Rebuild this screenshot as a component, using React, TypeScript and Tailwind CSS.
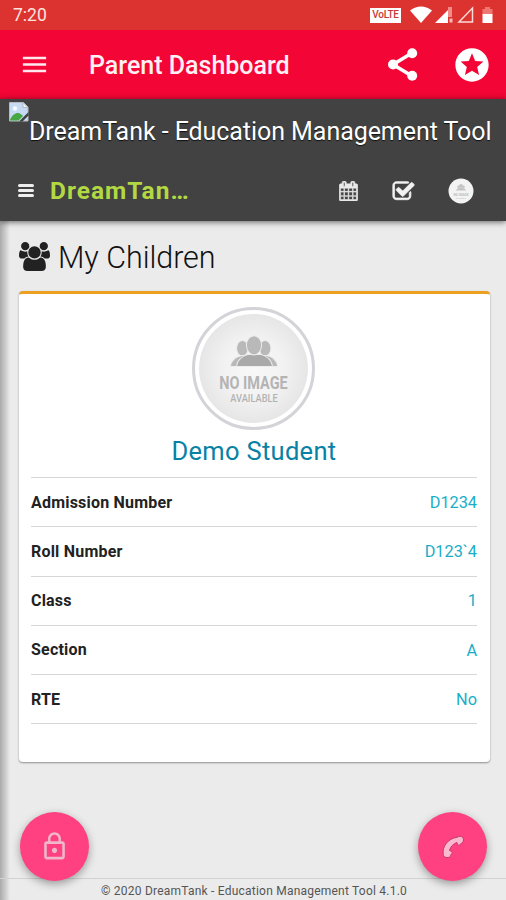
import React from 'react';
import { MdLockOutline, MdMenu, MdStars } from 'react-icons/md';

interface DetailRow {
    label: string;
    value: string;
}

const studentDetails: DetailRow[] = [
    { label: 'Admission Number', value: 'D1234' },
    { label: 'Roll Number', value: 'D123`4' },
    { label: 'Class', value: '1' },
    { label: 'Section', value: 'A' },
    { label: 'RTE', value: 'No' },
];

const ShareIcon: React.FC = () => (
    <svg viewBox="0 0 37 37" fill="#fff" className="size-[37px]">
        <path d="M28 7 9 18.500 28 30" fill="none" stroke="#fff" strokeWidth="3.600" />
        <circle cx="28.200" cy="7.300" r="5" />
        <circle cx="9" cy="18.500" r="5" />
        <circle cx="28.200" cy="29.700" r="5" />
    </svg>
);

const UsersIcon: React.FC<{ className?: string }> = ({ className = '' }) => (
    <svg viewBox="0 0 1920 1792" fill="currentColor" className={className} preserveAspectRatio="none">
        <path d="M593 896q-162 5-265 128h-134q-82 0-138-40.5t-56-118.5q0-353 124-353 6 0 43.5 21t97.5 42.5 119 21.5q67 0 133-23-5 37-5 66 0 139 81 256zm1071 637q0 120-73 189.5t-194 69.5h-874q-121 0-194-69.5t-73-189.5q0-53 3.5-103.5t14-109 26.5-108.5 43-97.5 62-81 85.5-53.5 111.5-20q10 0 43 21.5t73 48 107 48 135 21.5 135-21.5 107-48 73-48 43-21.5q61 0 111.5 20t85.5 53.5 62 81 43 97.5 26.5 108.5 14 109 3.5 103.5zm-1024-1277q0 106-75 181t-181 75-181-75-75-181 75-181 181-75 181 75 75 181zm704 384q0 159-112.5 271.5t-271.5 112.5-271.5-112.5-112.5-271.5 112.5-271.5 271.5-112.5 271.5 112.5 112.5 271.5zm576 225q0 78-56 118.5t-138 40.5h-134q-103-123-265-128 81-117 81-256 0-29-5-66 66 23 133 23 59 0 119-21.5t97.5-42.5 43.5-21q124 0 124 353zm-128-609q0 106-75 181t-181 75-181-75-75-181 75-181 181-75 181 75 75 181z" />
    </svg>
);

const CalendarIcon: React.FC = () => (
    <svg viewBox="64 0 1664 1792" fill="currentColor" stroke="currentColor" strokeWidth="50" className="h-[20px] w-[19px]">
        <path d="M192 1664h288v-288h-288v288zm352 0h320v-288h-320v288zm-352-352h288v-320h-288v320zm352 0h320v-320h-320v320zm-352-384h288v-288h-288v288zm736 736h320v-288h-320v288zm-384-736h320v-288h-320v288zm768 736h288v-288h-288v288zm-384-352h320v-320h-320v320zm-352-864v-288q0-13-9.5-22.5t-22.5-9.5h-64q-13 0-22.5 9.5t-9.5 22.5v288q0 13 9.5 22.5t22.5 9.5h64q13 0 22.5-9.5t9.5-22.5zm736 864h288v-320h-288v320zm-384-384h320v-288h-320v288zm384 0h288v-288h-288v288zm32-480v-288q0-13-9.5-22.5t-22.5-9.5h-64q-13 0-22.5 9.5t-9.5 22.5v288q0 13 9.5 22.5t22.5 9.5h64q13 0 22.5-9.5t9.5-22.5zm384-64v1280q0 52-38 90t-90 38h-1408q-52 0-90-38t-38-90v-1280q0-52 38-90t90-38h128v-96q0-66 47-113t113-47h64q66 0 113 47t47 113v96h384v-96q0-66 47-113t113-47h64q66 0 113 47t47 113v96h128q52 0 90 38t38 90z" />
    </svg>
);

const CheckSquareIcon: React.FC = () => (
    <svg viewBox="0 0 1792 1792" fill="currentColor" stroke="currentColor" strokeWidth="60" className="size-[23px]">
        <path d="M1472 930v318q0 119-84.5 203.5t-203.5 84.5h-832q-119 0-203.5-84.5t-84.5-203.5v-832q0-119 84.5-203.5t203.5-84.5h832q63 0 117 25 15 7 18 23 3 17-9 29l-49 49q-10 10-23 10-3 0-9-2-23-6-45-6h-832q-66 0-113 47t-47 113v832q0 66 47 113t113 47h832q66 0 113-47t47-113v-254q0-13 9-22l64-64q10-10 23-10 6 0 12 3 20 8 20 29zm231-489l-814 814q-24 24-57 24t-57-24l-430-430q-24-24-24-57t24-57l110-110q24-24 57-24t57 24l263 263 647-647q24-24 57-24t57 24l110 110q24 24 24 57t-24 57z" />
    </svg>
);

const PhoneIcon: React.FC = () => (
    <svg viewBox="0 0 24 24" className="size-[24px]">
        <path
            d="M2.200 19C1 11.500 7.500 3.200 16 2.300c1.800-1.300 4.800-1.300 5.800.2.900 1.600 1 3.300.1 4.600-1 1.500-2.600 1.500-3 2.600-.8.900-2.200.5-2.500-.5l-.5-1.700c-3.700 1.300-6.700 4.500-7.400 8l1.700.7c1.300.7 1.200 2 .3 2.800-.9.500-.5 2.200-2 3-1.500.9-3.500.8-4.800-.2-1-.7-1.500-1.600-1.500-2.800z"
            fill="#f9b8cf"
            stroke="#c53a68"
            strokeWidth="1"
            strokeLinejoin="round"
        />
    </svg>
);

// Placeholder glyph the browser shows when a logo fails to load
const BrokenImageIcon: React.FC = () => (
    <svg viewBox="0 0 20 20" className="size-5">
        <path d="M.5.500h14L19 5v14H.5z" fill="#c7daf3" stroke="#b7bbc0" />
        <path d="M14 .5V5.500h5z" fill="#f3f4f6" stroke="#a6abb1" strokeWidth=".7" />
        <circle cx="6" cy="6.500" r="2.200" fill="#f7fbff" />
        <path d="M1 18c2-5 5-7 8-7 2 0 4 2 5 3l-4.500 4.500H1z" fill="#45a843" />
        <path d="M10 19.500 19.500 10v3.500l-6 6z" fill="#424242" />
    </svg>
);

const Avatar: React.FC<{ className?: string }> = ({ className = '' }) => (
    <svg viewBox="0 0 122 122" className={className}>
        <defs>
            <radialGradient id="avatarFill" cx="50%" cy="50%" r="50%">
                <stop offset="0" stopColor="#f8f8f8" />
                <stop offset=".55" stopColor="#f2f2f2" />
                <stop offset="1" stopColor="#e6e6e7" />
            </radialGradient>
        </defs>
        <circle cx="61" cy="61" r="59.500" fill="#fff" stroke="#d3d3d8" strokeWidth="3" />
        <circle cx="61" cy="61" r="54" fill="url(#avatarFill)" />
        <g fill="#b9b9b9" stroke="#ededed" strokeWidth="1">
            <ellipse cx="50" cy="41" rx="5.800" ry="7.800" />
            <ellipse cx="72.500" cy="41" rx="5.800" ry="7.800" />
            <path d="M38 59c1-7 5-10 12-11l24 0c6 1 10 4 11 11z" />
            <path d="M44 59c1-7 5-10 12-12h12c7 2 11 5 12 12z" fill="#a9a9a9" />
            <ellipse cx="61.500" cy="38" rx="7.500" ry="9.500" />
        </g>
        <text x="27" y="81" textLength="68" lengthAdjust="spacingAndGlyphs" fontSize="17.500" fontWeight="700" fill="#b4b4b4">
            NO IMAGE
        </text>
        <text x="38" y="94" textLength="47" lengthAdjust="spacingAndGlyphs" fontSize="10" fontWeight="500" fill="#b2b2b2">
            AVAILABLE
        </text>
    </svg>
);

const SmallAvatar: React.FC<{ className?: string }> = ({ className = '' }) => (
    <svg viewBox="0 0 26 26" className={className}>
        <circle cx="13" cy="13" r="12.500" fill="#f3f3f3" />
        <g fill="#c4c4c4">
            <circle cx="13" cy="8" r="2" />
            <circle cx="10.500" cy="8.700" r="1.300" />
            <circle cx="15.500" cy="8.700" r="1.300" />
            <path d="M8 12.500c.5-2 2-2.500 5-2.500s4.500.5 5 2.500z" />
        </g>
        <text x="5.500" y="17.500" textLength="15" lengthAdjust="spacingAndGlyphs" fontSize="3.800" fontWeight="700" fill="#bdbdbd">
            NO IMAGE
        </text>
        <text x="8" y="20.500" textLength="10" lengthAdjust="spacingAndGlyphs" fontSize="2.300" fill="#c4c4c4">
            AVAILABLE
        </text>
    </svg>
);

const StatusBar: React.FC = () => (
    <div className="flex h-[30px] items-center justify-between bg-[#dd3330] pl-[13px] pr-[12px] text-white">
        <span className="pt-[2px] text-[17.5px] leading-none text-[#ffe2df]">7:20</span>
        <div className="flex items-center">
            <span className="flex h-[15px] w-[31px] items-center justify-center bg-white text-[10px] font-medium leading-none tracking-[-0.3px] text-[#ca3935]">VoLTE</span>
            <svg viewBox="0 0 84 18" className="ml-[9px] h-[18px] w-[84px]" fill="#fff">
                <path d="M0 4.500Q11-3.500 22 4.500L11 17z" />
                <path d="M25 17 38 4v13z" />
                <path d="M38 1h4v10h-4z" fill="#f28c88" />
                <path d="M39.500 12.500h3v4h-3z" fill="#f7bbb8" />
                <path d="M49 16 62.500 2v14z" fill="none" stroke="#ffdbd8" strokeWidth="1.500" />
                <path d="M75 1h5v2h2.500v6h-10V3H75z" fill="#ef7772" />
                <path d="M72.500 8h10v9h-10z" />
            </svg>
        </div>
    </div>
);

const AppBar: React.FC = () => (
    <div className="flex h-[69px] shrink-0 items-center bg-[#f30535] pl-[19px] pr-[14px] text-white">
        <MdMenu className="size-[31px] text-[#ffe9ee]" />
        <h1 className="ml-[39px] flex-1 whitespace-nowrap pt-[3px] text-[25px] font-medium text-[#fff0f3]">Parent Dashboard</h1>
        <ShareIcon />
        <MdStars className="ml-[31px] size-[40px]" />
    </div>
);

const SiteHeader: React.FC = () => (
    <header className="relative z-10 h-[122px] shrink-0 bg-[#424242] text-white shadow-[0_1px_6px_rgba(0,0,0,0.6)]">
        <div className="flex h-[60px] items-start pl-[9px] pt-[3px]">
            <BrokenImageIcon />
            <span className="whitespace-nowrap pt-[13px] text-[25px] leading-[34px] tracking-[-0.06px] [text-shadow:0_1px_1px_#111]">DreamTank - Education Management Tool</span>
        </div>
        <div className="flex h-[62px] items-center pl-[18px] pr-[32px] pt-[1px]">
            <div className="flex w-[16px] flex-col gap-[2px]">
                <span className="h-[3px] rounded-sm bg-[#eee]" />
                <span className="h-[3px] rounded-sm bg-[#eee]" />
                <span className="h-[3px] rounded-sm bg-[#eee]" />
            </div>
            <span className="ml-[16px] flex-1 pt-[2px] text-[24.5px] font-bold tracking-[1px] text-[#b2d943]">DreamTan…</span>
            <span className="text-[#e9e9e9]"><CalendarIcon /></span>
            <span className="ml-[34px] pt-[2px] text-[#f2f2f2]"><CheckSquareIcon /></span>
            <SmallAvatar className="ml-[33px] size-[26px]" />
        </div>
    </header>
);

const StudentCard: React.FC = () => (
    <section className="h-[471px] rounded-[4px] border-t-[3px] border-[#eba022] bg-white pl-[12px] pr-[13px] shadow-[0_1px_2px_rgba(0,0,0,0.4)]">
        <div className="flex h-[184px] flex-col items-center border-b-[1.5px] border-[#d6d6d6] pt-[13px]">
            <Avatar className="mr-px size-[123px]" />
            <h3 className="mt-[4px] text-[25.5px] leading-[34px] tracking-[0.3px] text-[#0782a5]">Demo Student</h3>
        </div>
        <dl>
            {studentDetails.map((row) => (
                <div key={row.label} className="flex h-[49.25px] items-center justify-between border-b-[1.5px] border-[#d6d6d6] pt-[1px] text-[16px]">
                    <dt className="font-bold tracking-[0.2px] text-[#222]">{row.label}</dt>
                    <dd className="pt-px text-[16.3px] text-[#19aec8]">{row.value}</dd>
                </div>
            ))}
        </dl>
    </section>
);

const App: React.FC = () => (
    <div className="flex h-[900px] w-[506px] flex-col overflow-hidden bg-[#ebebeb] font-[Roboto,'Liberation_Sans',sans-serif]">
        <StatusBar />
        <AppBar />
        <SiteHeader />
        <main className="relative flex-1">
            <div className="absolute inset-y-0 left-0 w-[10px] bg-linear-to-r from-[#aaa] to-[#ebebeb]" />
            <div className="pl-[19px] pr-[16px]">
                <h2 className="flex h-[70px] items-center text-[30.5px] font-light text-[#111]">
                    <UsersIcon className="mr-[8px] mt-[1px] h-[29px] w-[31px] text-[#222]" />
                    <span className="pt-[4px] tracking-[-0.05px]">My Children</span>
                </h2>
                <StudentCard />
            </div>
            <button type="button" aria-label="Lock" className="absolute bottom-[19px] left-[20px] z-10 flex size-[69px] items-center justify-center rounded-full bg-[#ff4081] text-[#f0b6c9] shadow-[0_3px_8px_rgba(0,0,0,0.35)]">
                <MdLockOutline className="size-[31px]" />
            </button>
            <button type="button" aria-label="Call" className="absolute bottom-[19px] right-[19px] z-10 flex size-[69px] items-center justify-center rounded-full bg-[#ff4081] shadow-[0_3px_8px_rgba(0,0,0,0.35)]">
                <PhoneIcon />
            </button>
            <footer className="absolute inset-x-0 bottom-0 flex h-[22px] items-center justify-center border-t border-[#d2d2d2] pl-[2px] pt-[2px] text-[12px] tracking-[0.22px] text-[#555]">
                © 2020 DreamTank - Education Management Tool 4.1.0
            </footer>
        </main>
    </div>
);

export default App;
